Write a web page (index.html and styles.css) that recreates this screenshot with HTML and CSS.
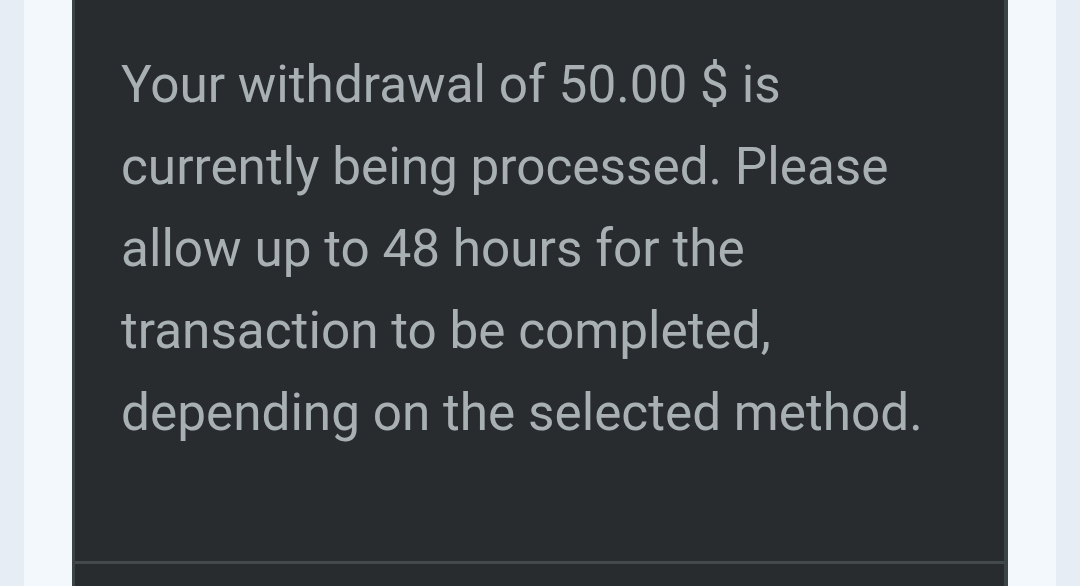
FILE: index.html
```html
<!DOCTYPE html>
<html>
<head>
<meta charset="utf-8">
<link rel="stylesheet" href="styles.css">
</head>
<body>
<div class="page">
  <div class="sheet">
    <div class="card">
      <div class="card-body">
        <p class="message">Your withdrawal of 50.00 $ is currently being processed. Please allow up to 48 hours for the transaction to be completed, depending on the selected method.</p>
      </div>
      <div class="card-footer"></div>
    </div>
  </div>
</div>
</body>
</html>
```

FILE: styles.css
```css
html, body {
  margin: 0;
  padding: 0;
  height: 100%;
  overflow: hidden;
}
body {
  background: #e6edf5;
  font-family: Roboto, "Noto Sans", sans-serif;
}
.page {
  padding: 0 24px;
  height: 100%;
}
.sheet {
  background: #f3f8fd;
  padding: 0 48px;
  height: 100%;
}
.card {
  background: #292c2e;
  border-left: 3px solid #3d4447;
  border-right: 4px solid #3d4447;
  height: 100%;
  box-sizing: border-box;
}
.card-body {
  padding: 44px 40px 0 46px;
  height: 564px;
  box-sizing: border-box;
  border-bottom: 3px solid #424a4c;
}
.message {
  margin: 0;
  font-size: 51.3px;
  line-height: 82px;
  color: #a8b0b4;
  max-width: 815px;
}
.card-footer {
  height: 40px;
}
```
